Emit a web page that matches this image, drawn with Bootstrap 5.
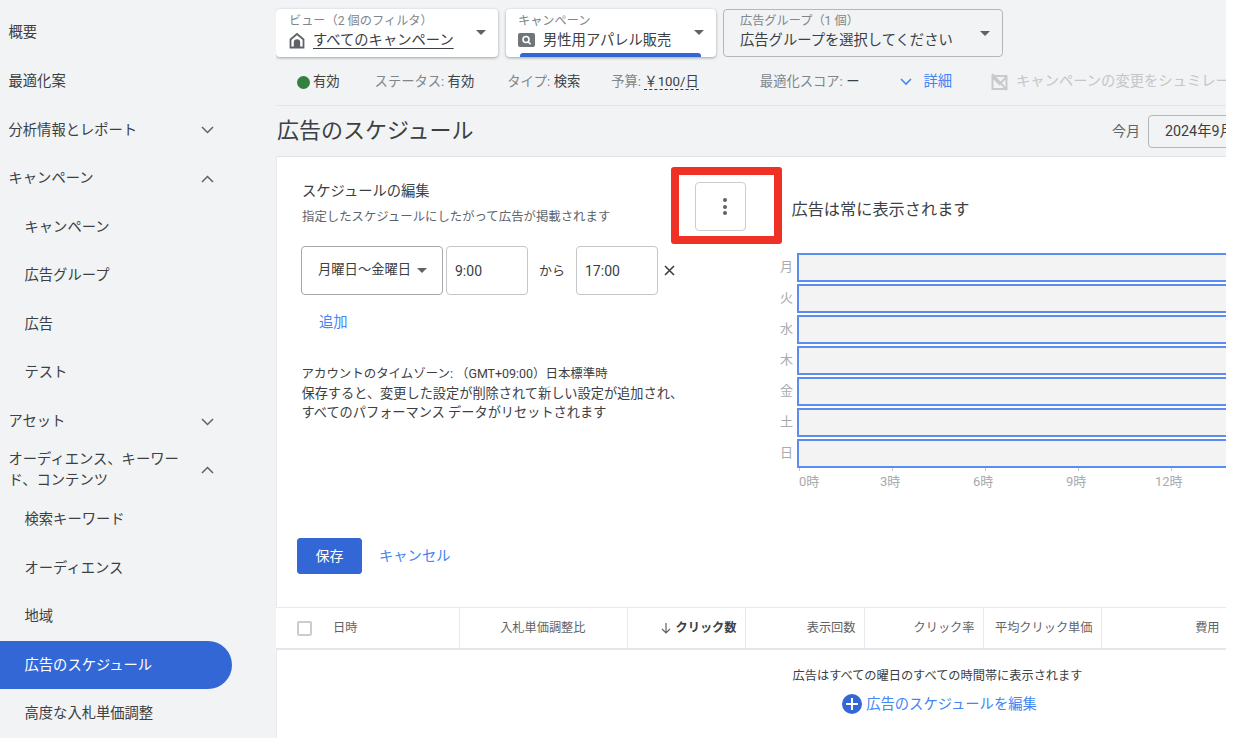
<!DOCTYPE html>
<html lang="ja">
<head>
<meta charset="utf-8">
<title>広告のスケジュール</title>
<link href="https://cdn.jsdelivr.net/npm/bootstrap@5.3.0/dist/css/bootstrap.min.css" rel="stylesheet">
<style>
html,body{background:#fff;margin:0;height:100%;overflow:hidden}
body{font-family:Roboto,"Noto Sans CJK JP",sans-serif;color:#3c4043;font-size:14.3px}
.shell{width:1226px;height:738px;overflow:hidden;background:#f1f3f4}
.side{width:276px;flex:none;padding-top:8.6px}
.side .nav-link{height:48.6px;padding:0 0 0 8.5px;color:#3c4043;font-size:14.3px;line-height:21px;display:flex;align-items:center;width:232px;border-radius:0 25px 25px 0}
.side .nav-link.tall{height:49.4px}
.side .nav-link.sub{padding-left:24.5px}
.side .nav-link.active{background:#3367d6;color:#fff}
.side-txt{width:180px;flex:none}
.chev{width:13px;height:8px;margin-left:12.500px;flex:none}
.main{width:950px;flex:none;overflow:hidden}
.top{padding:9px 0 0 0;gap:8px}
.pick{height:48px;border-radius:4px;background:#fff;box-shadow:0 1px 3px rgba(60,64,67,.45);padding:5px 0 0 13px;position:relative;flex:none}
.pick-a{width:222px}
.pick-b{width:210px;padding-left:12px}
.pick-c{width:280px;background:transparent;box-shadow:none;border:1px solid #b4b6b9;padding:4px 0 0 16px;margin-left:-1px}
.pick-l{font-size:12.2px;line-height:15px;color:#80868b;white-space:nowrap}
.pick-v{font-size:14.3px;line-height:20px;margin-top:1px;white-space:nowrap;color:#3c4043;display:flex;align-items:center}
.pick-v u{text-underline-offset:3px}
.tri{position:absolute;top:21px;right:12px;width:0;height:0;border-left:5px solid transparent;border-right:5px solid transparent;border-top:5px solid #5f6368}
.pick-bar{position:absolute;left:14px;right:15px;bottom:0;height:4px;background:#3367d6;border-radius:3px 3px 0 0}
.stat{height:49px;font-size:13.3px;color:#80868b;white-space:nowrap;border-bottom:1px solid #e4e6e9;padding:2px 0 0 21px}
.stat>*{flex:none}
.stat b{font-weight:400;color:#3c4043}
.dot{width:13px;height:13px;border-radius:50%;background:#34803f;margin-right:3px}
.dash{border-bottom:1px dashed #3c4043;line-height:17px}
.blue{color:#4285f4}
.big{font-size:14.3px;margin-left:11px}
.muted-l{color:#c4c6c9;font-size:14.3px}
.s1{margin-left:35px}.s2{margin-left:33px}.s3{margin-left:31px}.s4{margin-left:61px}.s5{margin-left:41px}.s6{margin-left:39px}
.ttl{height:51px;border-bottom:1px solid #e0e2e5;padding-left:1px}
.ttl h1{font-size:22px;font-weight:400;margin:0;color:#3c4043;line-height:50px}
.date-l{font-size:14px;color:#5f6368;margin-left:auto}
.date-b{width:130px;height:33px;border:1px solid #b4b6b9;border-radius:4px;margin-left:8px;padding-left:16px;font-size:14.3px;line-height:31px;margin-right:-52px;flex:none;white-space:nowrap}
.pane{width:1322px;background:#fff;height:582px;position:relative;border-left:1px solid #e8eaed}
.sched{height:381px}
.col-l{width:503px;flex:none;padding:24px 0 0 25px}
.col-r{flex:1;padding-top:41px}
.h-l{font-size:14.3px;line-height:20px;color:#3c4043}
.h-s{font-size:12.4px;line-height:20px;color:#5f6368;margin-top:6px;white-space:nowrap}
.kebab{width:51px;height:49px;margin:1px 34px 0 0;border:1px solid #ccc;border-radius:4px;background:#fff;padding:0 0 0 8px;gap:2.5px;flex:none}
.kebab i{width:4px;height:4px;border-radius:50%;background:#5f6368;display:block}
.ctrls{margin:14px 0 0 -1px}
.sel{width:142px;height:49px;border:1px solid #a6a8ab;border-radius:4px;font-size:13.3px;padding-left:16px;white-space:nowrap;gap:6px;flex:none;color:#3c4043}
.sel .tri2{width:0;height:0;border-left:5px solid transparent;border-right:5px solid transparent;border-top:5px solid #5f6368}
.ctrls .form-control{width:82px;height:49px;margin-top:1px;font-size:14px;padding:0 8px;border:1px solid #c4c6c9;border-radius:4px;color:#3c4043;flex:none;margin-left:3px}
.ctrls .in2{margin-left:0}
.kara{width:48px;font-size:13px;text-align:center;flex:none;margin-top:1px}
.xx{margin:1px 0 0 5px;width:13px;height:13px;flex:none}
.add{font-size:14.3px;margin:17px 0 0 17px;line-height:20px}
.note{font-size:13.2px;line-height:19.5px;margin-top:32px;margin-left:-.5px;color:#3c4043;white-space:nowrap}
.note-1{font-size:12.45px}
.chart-h{font-size:16.2px;line-height:24px;padding-left:11.500px;color:#3c4043}
.chart{margin-top:31px;gap:2px}
.day{height:29px}
.day-l{width:17px;font-size:13px;color:#a8aaad;flex:none;line-height:27px}
.day-b{flex:1;background:#f3f3f3;border:2px solid #5b8cf0}
.ticks{height:3px;margin-left:19px}
.ticks span{width:93px;border-left:1px solid #c4c6c9;flex:none}
.axis{margin:1px 0 0 19px;font-size:13px;line-height:20px;color:#a8aaad}
.axis span{flex:none;white-space:nowrap}
.a0{width:81px}.a1{width:93px}.a2{width:93px}.a3{width:89px}
.act{padding-left:20px;height:36px;gap:17px}
.act .blue{margin-top:2px}
.btn-save{--bs-btn-bg:#3367d6;--bs-btn-border-color:#3367d6;--bs-btn-hover-bg:#3367d6;--bs-btn-color:#fff;width:65px;height:36px;font-size:14px;padding:1px 0 0;border-radius:3px}
.grid-t{width:1321px;table-layout:fixed;margin:33px 0 0 -1px;font-size:12.2px}
.grid-t th{height:41px;padding:0 8px;font-weight:400;color:#5f6368;text-align:right;vertical-align:middle;border-top:1px solid #e8eaed;border-bottom:2px solid #e4e6eb;border-left:1px solid #e8eaed;white-space:nowrap;background:#fff}
.grid-t th.first{border-left:0;text-align:left;padding-left:21px}
.grid-t th.bid{padding-right:41px}
.grid-t th.sorted{font-weight:700;color:#3c4043}
.cb.form-check-input{width:15px;height:15px;border:2px solid #ccc;border-radius:2px;margin:0 21px 0 0;vertical-align:middle;float:none}
.empty{text-align:center;margin-top:16px;font-size:12.2px;line-height:20px;color:#3c4043}
.edit{font-size:14.3px;line-height:24px;margin-top:6px;padding-left:4px}
.edit svg{vertical-align:-5px;margin-right:4px}
.red{position:absolute;left:394px;top:10px;width:111px;height:77px;border:8px solid #ee3124;border-radius:3px;pointer-events:none}
</style>
</head>
<body>
<div class="shell d-flex">
  <nav class="side nav flex-column flex-nowrap">
    <a class="nav-link" href="#"><span class="side-txt">概要</span></a>
    <a class="nav-link" href="#"><span class="side-txt">最適化案</span></a>
    <a class="nav-link" href="#"><span class="side-txt">分析情報とレポート</span><svg class="chev" viewBox="0 0 13 8"><path d="M1 1l5.500 5.500L12 1" fill="none" stroke="#5f6368" stroke-width="1.500"/></svg></a>
    <a class="nav-link" href="#"><span class="side-txt">キャンペーン</span><svg class="chev" viewBox="0 0 13 8"><path d="M1 7l5.500-5.500L12 7" fill="none" stroke="#5f6368" stroke-width="1.500"/></svg></a>
    <a class="nav-link sub" href="#">キャンペーン</a>
    <a class="nav-link sub" href="#">広告グループ</a>
    <a class="nav-link sub" href="#">広告</a>
    <a class="nav-link sub" href="#">テスト</a>
    <a class="nav-link" href="#"><span class="side-txt">アセット</span><svg class="chev" viewBox="0 0 13 8"><path d="M1 1l5.500 5.500L12 1" fill="none" stroke="#5f6368" stroke-width="1.500"/></svg></a>
    <a class="nav-link tall" href="#"><span class="side-txt">オーディエンス、キーワード、コンテンツ</span><svg class="chev" viewBox="0 0 13 8"><path d="M1 7l5.500-5.500L12 7" fill="none" stroke="#5f6368" stroke-width="1.500"/></svg></a>
    <a class="nav-link sub" href="#">検索キーワード</a>
    <a class="nav-link sub" href="#">オーディエンス</a>
    <a class="nav-link sub" href="#">地域</a>
    <a class="nav-link sub active" href="#">広告のスケジュール</a>
    <a class="nav-link sub" href="#">高度な入札単価調整</a>
  </nav>
  <main class="main">
    <div class="top d-flex">
      <div class="pick pick-a">
        <div class="pick-l">ビュー（2 個のフィルタ）</div>
        <div class="pick-v"><svg width="16" height="17" viewBox="0 0 16 17" class="me-2"><path d="M8 2L1.500 7.500V15.500H14.500V7.500z" fill="none" stroke="#5f6368" stroke-width="1.800"/><path d="M4.800 15V10.500a3.200 3.200 0 0 1 6.400 0V15z" fill="#5f6368"/></svg><u>すべてのキャンペーン</u></div>
        <span class="tri"></span>
      </div>
      <div class="pick pick-b">
        <div class="pick-l">キャンペーン</div>
        <div class="pick-v"><svg width="17" height="14" viewBox="0 0 17 14" class="me-2"><rect width="17" height="14" rx="2" fill="#70757a"/><circle cx="8" cy="6.500" r="3" fill="none" stroke="#fff" stroke-width="1.600"/><path d="M10 8.700l2.600 2.600" stroke="#fff" stroke-width="1.600"/></svg>男性用アパレル販売</div>
        <span class="tri"></span>
        <span class="pick-bar"></span>
      </div>
      <div class="pick pick-c">
        <div class="pick-l">広告グループ（1 個）</div>
        <div class="pick-v">広告グループを選択してください</div>
        <span class="tri"></span>
      </div>
    </div>
    <div class="stat d-flex align-items-center">
      <span class="dot"></span><b>有効</b>
      <span class="s1">ステータス: <b>有効</b></span>
      <span class="s2">タイプ: <b>検索</b></span>
      <span class="s3">予算: <b class="dash">￥100/日</b></span>
      <span class="s4">最適化スコア: <b>ー</b></span>
      <svg class="s5" width="12" height="8" viewBox="0 0 12 8"><path d="M1 1l5 5 5-5" fill="none" stroke="#4285f4" stroke-width="1.600"/></svg>
      <span class="blue big">詳細</span>
      <svg class="s6" width="17" height="18" viewBox="0 0 17 18"><path d="M1.500 3h14v13h-14zM1 1l15 16M1.500 4l7 7 7-7" fill="none" stroke="#c8cacd" stroke-width="2"/></svg>
      <span class="muted-l ms-2">キャンペーンの変更をシュミレーション</span>
    </div>
    <div class="ttl d-flex align-items-center">
      <h1>広告のスケジュール</h1>
      <span class="date-l">今月</span>
      <div class="date-b">2024年9月</div>
    </div>
    <section class="pane">
      <div class="sched d-flex">
        <div class="col-l">
          <div class="d-flex justify-content-between align-items-start">
            <div>
              <div class="h-l">スケジュールの編集</div>
              <div class="h-s">指定したスケジュールにしたがって広告が掲載されます</div>
            </div>
            <button type="button" class="kebab d-flex flex-column align-items-center justify-content-center"><i></i><i></i><i></i></button>
          </div>
          <div class="ctrls d-flex align-items-center">
            <div class="sel d-flex align-items-center">月曜日～金曜日<span class="tri2"></span></div>
            <input class="form-control" value="9:00" aria-label="開始時刻">
            <span class="kara">から</span>
            <input class="form-control in2" value="17:00" aria-label="終了時刻">
            <svg class="xx" viewBox="0 0 13 13"><path d="M2 2l9 9M11 2l-9 9" stroke="#3c4043" stroke-width="1.600"/></svg>
          </div>
          <div class="add blue">追加</div>
          <div class="note"><span class="note-1">アカウントのタイムゾーン: （GMT+09:00）日本標準時</span><br>保存すると、変更した設定が削除されて新しい設定が追加され、<br>すべてのパフォーマンス データがリセットされます</div>
        </div>
        <div class="col-r">
          <div class="chart-h">広告は常に表示されます</div>
          <div class="chart d-flex flex-column">
            <div class="day d-flex"><span class="day-l">月</span><div class="day-b"></div></div>
            <div class="day d-flex"><span class="day-l">火</span><div class="day-b"></div></div>
            <div class="day d-flex"><span class="day-l">水</span><div class="day-b"></div></div>
            <div class="day d-flex"><span class="day-l">木</span><div class="day-b"></div></div>
            <div class="day d-flex"><span class="day-l">金</span><div class="day-b"></div></div>
            <div class="day d-flex"><span class="day-l">土</span><div class="day-b"></div></div>
            <div class="day d-flex"><span class="day-l">日</span><div class="day-b"></div></div>
          </div>
          <div class="ticks d-flex"><span></span><span></span><span></span><span></span><span></span></div>
          <div class="axis d-flex"><span class="a0">0時</span><span class="a1">3時</span><span class="a2">6時</span><span class="a3">9時</span><span>12時</span></div>
        </div>
      </div>
      <div class="act d-flex align-items-center">
        <button type="button" class="btn btn-save">保存</button>
        <span class="blue">キャンセル</span>
      </div>
      <table class="table grid-t mb-0">
        <colgroup><col style="width:183px"><col style="width:168px"><col style="width:118px"><col style="width:119px"><col style="width:119px"><col style="width:118px"><col style="width:127px"><col></colgroup>
        <thead><tr>
          <th class="first"><input class="form-check-input cb" type="checkbox" aria-label="すべて選択">日時</th>
          <th class="bid">入札単価調整比</th>
          <th class="sorted"><svg width="12" height="12" viewBox="0 0 12 12" class="me-1 align-middle"><path d="M6 1v10M2 7l4 4 4-4" fill="none" stroke="#5f6368" stroke-width="1.200"/></svg>クリック数</th>
          <th>表示回数</th>
          <th>クリック率</th>
          <th>平均クリック単価</th>
          <th>費用</th>
          <th></th>
        </tr></thead>
      </table>
      <div class="empty">広告はすべての曜日のすべての時間帯に表示されます
        <div class="edit blue"><svg width="20" height="20" viewBox="0 0 20 20"><circle cx="10" cy="10" r="10" fill="#3367d6"/><path d="M10 4v12M4 10h12" stroke="#fff" stroke-width="2"/></svg>広告のスケジュールを編集</div>
      </div>
      <div class="red"></div>
    </section>
  </main>
</div>
<script src="https://cdn.jsdelivr.net/npm/bootstrap@5.3.0/dist/js/bootstrap.bundle.min.js"></script>
</body>
</html>
